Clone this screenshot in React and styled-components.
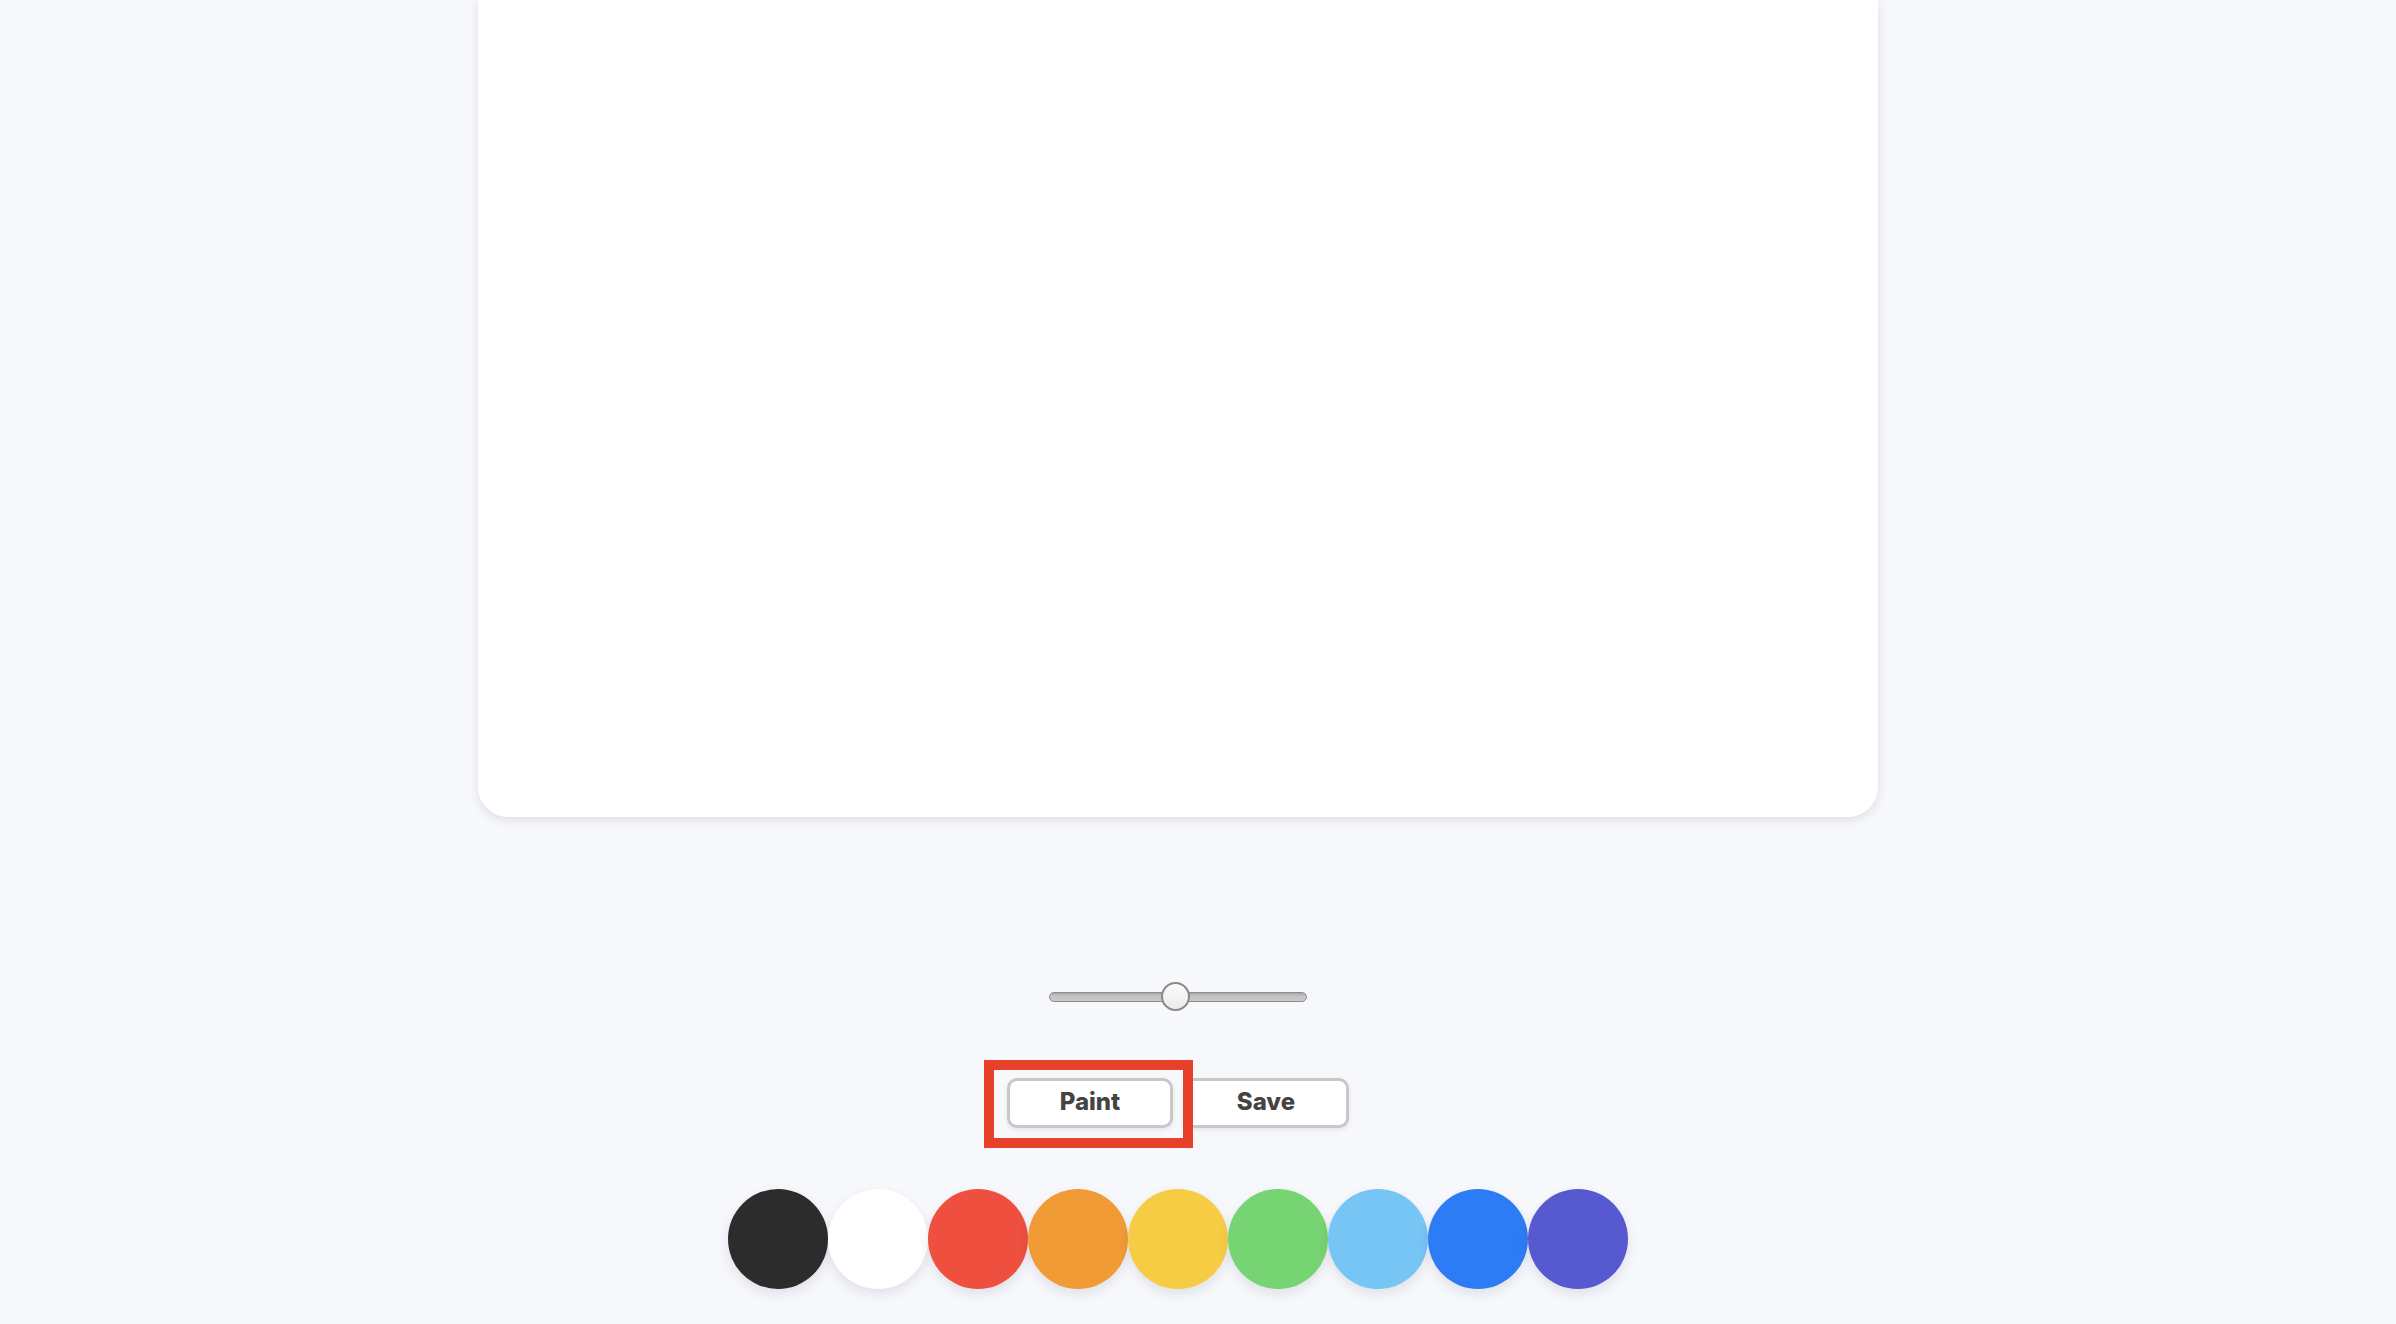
import React from "react";
import styled, { createGlobalStyle } from "styled-components";

const Global = createGlobalStyle`
  html, body { margin: 0; padding: 0; background: #f7f8fc; overflow: hidden; }
  body { font-family: Inter, "Noto Sans", "Liberation Sans", sans-serif; }
  * { box-sizing: border-box; }
`;

const Page = styled.div`
  width: calc(100% - 40px);
  height: 1324px;
  display: flex;
  flex-direction: column;
  align-items: center;
`;

const Canvas = styled.div`
  width: 1400px;
  height: 817px;
  flex-shrink: 0;
  background: #ffffff;
  border-radius: 0 0 30px 30px;
  box-shadow: 0 3px 10px rgba(40, 40, 70, 0.12);
`;

const SliderRow = styled.div`
  margin-top: 165px;
  height: 30px;
  display: flex;
  align-items: center;
`;

const Range = styled.input`
  -webkit-appearance: none;
  appearance: none;
  width: 258px;
  height: 30px;
  margin: 0;
  background: transparent;
  &::-webkit-slider-runnable-track {
    height: 10px;
    border-radius: 5px;
    background: linear-gradient(#a9a9a9, #c4c4c4 40%, #c9c9c9);
    border: 1px solid #8c8c8c;
  }
  &::-webkit-slider-thumb {
    -webkit-appearance: none;
    width: 29px;
    height: 29px;
    margin-top: -11px;
    border-radius: 50%;
    background: linear-gradient(#fbfbfb, #f3f3f3 50%, #ececec);
    border: 2px solid #8a8a8a;
  }
`;

const ButtonRow = styled.div`
  margin-top: 66px;
  display: flex;
  gap: 10px;
`;

const Highlight = styled.div`
  position: relative;
  display: flex;
`;

const Marker = styled.div`
  position: absolute;
  left: -23px;
  right: -20px;
  top: -18px;
  bottom: -20px;
  border: 10px solid #e8412a;
  pointer-events: none;
`;

const Button = styled.button`
  width: 166px;
  height: 50px;
  background: #ffffff;
  border: 3px solid #c8c8c8;
  border-radius: 10px;
  box-shadow: 0 2px 5px rgba(0, 0, 0, 0.08);
  font-family: Inter, "Noto Sans", "Liberation Sans", sans-serif;
  font-weight: 800;
  font-size: 24px;
  line-height: 1;
  color: #444444;
  padding: 0 0 2px;
  cursor: pointer;
`;

const Palette = styled.div`
  margin-top: 61px;
  display: flex;
`;

const Swatch = styled.div`
  width: 100px;
  height: 100px;
  border-radius: 50%;
  background: ${(p) => p.$color};
  box-shadow: 0 5px 12px rgba(30, 30, 60, 0.1);
`;

const colors = [
  "#2c2c2c",
  "#ffffff",
  "#ee4f3f",
  "#f19b37",
  "#f6cc45",
  "#77d472",
  "#76c5f5",
  "#2d7cf6",
  "#5659d0",
];

export default function App() {
  return (
    <>
      <Global />
      <Page>
        <Canvas />
        <SliderRow>
          <Range type="range" min="1" max="50" defaultValue="25" />
        </SliderRow>
        <ButtonRow>
          <Highlight>
            <Button>Paint</Button>
            <Marker />
          </Highlight>
          <Button>Save</Button>
        </ButtonRow>
        <Palette>
          {colors.map((c) => (
            <Swatch key={c} $color={c} />
          ))}
        </Palette>
      </Page>
    </>
  );
}
